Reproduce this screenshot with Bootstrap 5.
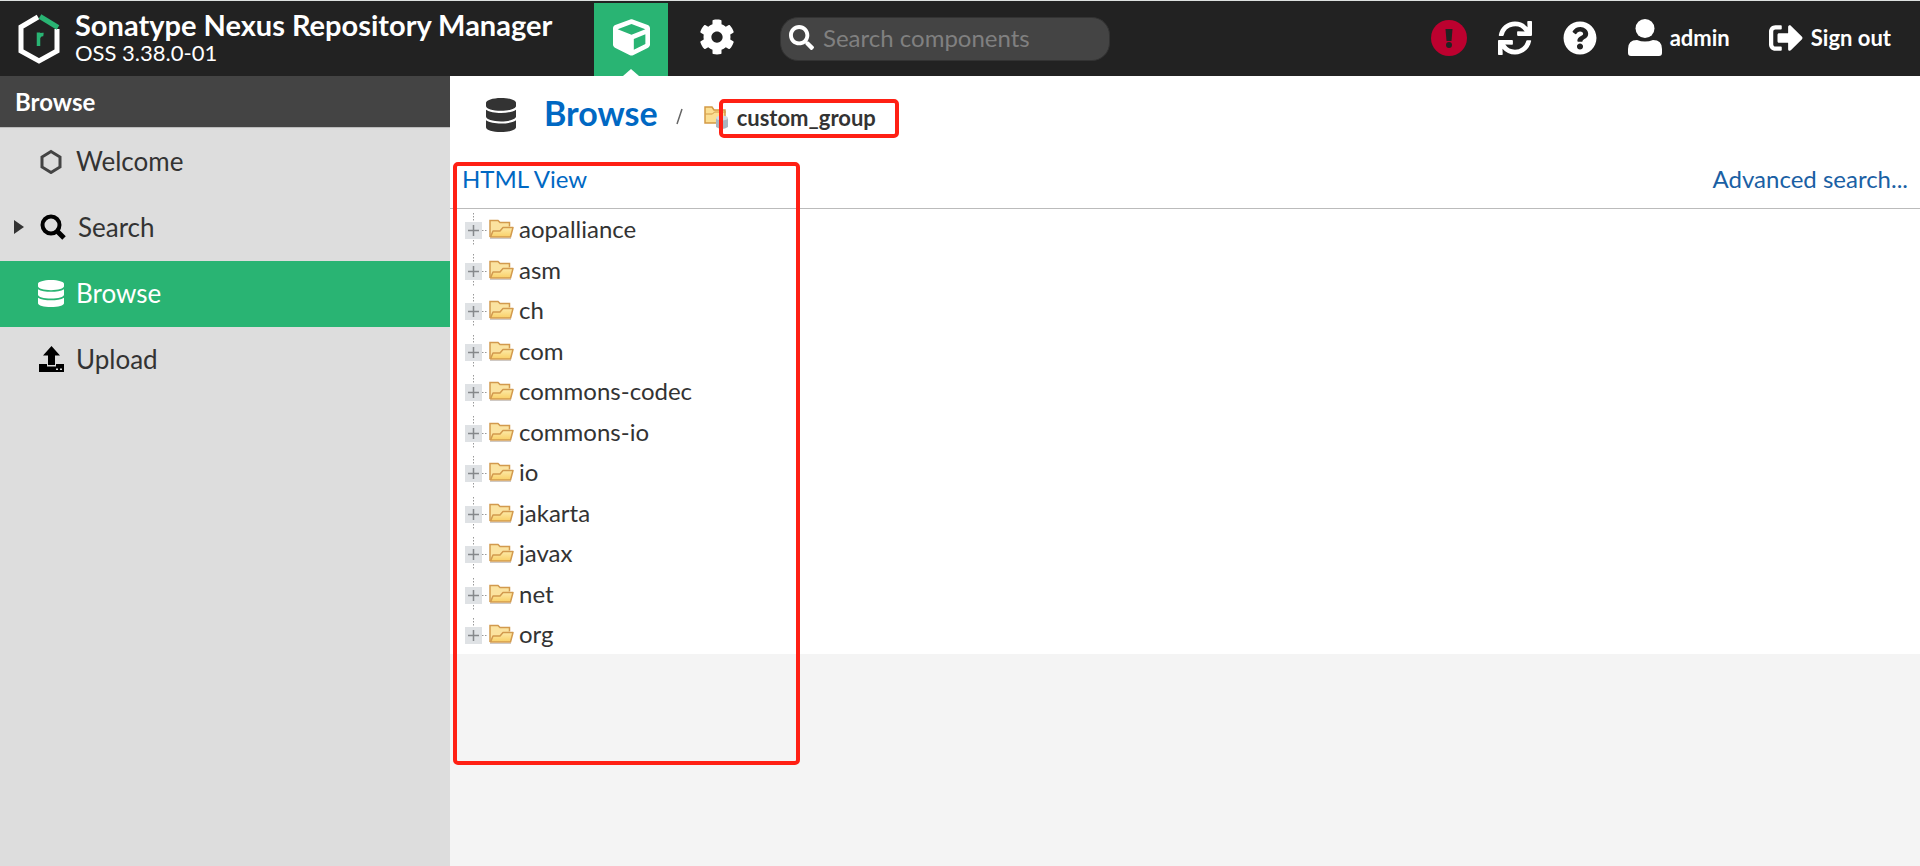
<!DOCTYPE html>
<html lang="en">
<head>
<meta charset="utf-8">
<meta name="viewport" content="width=device-width, initial-scale=1">
<title>Browse - Nexus Repository Manager</title>
<link href="https://cdn.jsdelivr.net/npm/bootstrap@5.3.0/dist/css/bootstrap.min.css" rel="stylesheet">
<style>
  body { font-family: Lato, "Liberation Sans", sans-serif; font-size: 24px; line-height: 32px; color: #333; background: #f4f4f4; }
  a { text-decoration: none; }
  svg { display: block; flex: none; }
  .topbar { height: 76px; background: #222; border-top: 1px solid #dde1e0; color: #fff; }
  .brand { width: 594px; padding-left: 18px; gap: 15px; }
  .brand-name { font-size: 29px; line-height: 28px; font-weight: 700; }
  .brand-version { font-size: 22px; line-height: 28px; }
  .mode { width: 74px; border: 0; background: none; color: #fff; padding: 0 0 4px; }
  .mode.active { background: #29b473; margin-top: 2px; }
  .mode.active::after { content: ""; position: absolute; left: 50%; bottom: 0; margin-left: -8px; border: 8px solid transparent; border-top: 0; border-bottom: 7px solid #fff; }
  .quick { width: 330px; height: 44px; margin: 0 0 0 30px; padding: 0 8px 2px; gap: 9px; background: #444; border: 1px solid #333; border-radius: 18px; }
  .quick input { min-width: 0; background: none; border: 0; outline: 0; padding: 0; color: #fff; font-size: 24px; }
  .quick input::placeholder { color: #808080; opacity: 1; }
  .tools { gap: 31px; padding: 0 29px 2px 0; }
  .tools button { border: 0; background: none; padding: 0; color: #fff; font-size: 22px; font-weight: 700; gap: 8px; }
  .side { width: 450px; background: #ddd; }
  .side-title { font-size: 24px; line-height: 51px; padding-left: 15px; background: #444; color: #fff; border-bottom: 1px solid #bbb; font-weight: 700; height: 52px; margin-bottom: 1px; }
  .side-link { height: 66px; padding: 0 0 2px 38px; gap: 12px; color: #333; font-size: 26px; }
  .side-link.active { background: #29b473; color: #fff; }
  .twisty { left: 14px; top: 25px; }
  .crumbs { height: 81px; padding: 0 0 3px 36px; }
  .crumbs h1 { font-size: 34px; line-height: 40px; font-weight: 700; }
  .blue { color: #0068c3; }
  .deep-blue { color: #1a60a4; }
  .repo { font-size: 22px; font-weight: 700; gap: 8px; margin: 5px 0 0 20px; }
  .bar { height: 52px; padding: 6px 12px 0; border-bottom: 1px solid #bbb; }
  .tree li { height: 40px; padding-left: 15px; gap: 2px; }
  .tree li:nth-child(even) { height: 41px; }
  .tree span { padding-left: 3px; }
  .frame { position: absolute; border: 4px solid #ff2014; border-radius: 5px; pointer-events: none; }
  .frame-repo { inset: -3px -23px -4px 15px; }
  .frame-tree { left: 3px; top: 86px; width: 347px; height: 603px; }
</style>
</head>
<body>
<svg width="0" height="0" class="position-absolute" aria-hidden="true">
  <defs>
    <symbol id="search" viewBox="0 0 512 512"><path fill="currentColor" d="M505 442.700L405.300 343c-4.500-4.500-10.600-7-17-7H372c27.600-35.300 44-79.700 44-128C416 93.100 322.900 0 208 0S0 93.100 0 208s93.100 208 208 208c48.300 0 92.700-16.400 128-44v16.300c0 6.400 2.500 12.500 7 17l99.700 99.700c9.400 9.400 24.600 9.400 33.900 0l28.300-28.300c9.400-9.400 9.400-24.600.1-34zM208 336c-70.700 0-128-57.200-128-128 0-70.700 57.200-128 128-128 70.700 0 128 57.200 128 128 0 70.700-57.200 128-128 128z"/></symbol>
    <symbol id="database" viewBox="0 0 448 512" preserveAspectRatio="none"><path fill="currentColor" d="M448 73.143v45.714C448 159.143 347.667 192 224 192S0 159.143 0 118.857V73.143C0 32.857 100.333 0 224 0s224 32.857 224 73.143zM448 176v102.857C448 319.143 347.667 352 224 352S0 319.143 0 278.857V176c48.125 33.143 136.208 48.572 224 48.572S399.874 209.143 448 176zm0 160v102.857C448 479.143 347.667 512 224 512S0 479.143 0 438.857V336c48.125 33.143 136.208 48.572 224 48.572S399.874 369.143 448 336z"/></symbol>
    <linearGradient id="gold" x1="0" y1="0" x2="0" y2="1"><stop offset="0" stop-color="#fdeaa8"/><stop offset="1" stop-color="#f9cf66"/></linearGradient>
    <symbol id="folder" viewBox="0 0 25 20">
      <path d="M1 19.500h21" stroke="#cfc9c4" stroke-width="1"/>
      <path d="M1 18V1.500h8l2 2h9.500v4" fill="#fbe3a0" stroke="#d29a4e" stroke-width="1.500"/>
      <path d="M1.500 18L4 12h7l3-3.500h10l-2.500 9.500z" fill="url(#gold)" stroke="#d29a4e" stroke-width="1.500" stroke-linejoin="round"/>
    </symbol>
    <symbol id="expander" viewBox="0 0 22 36">
      <path d="M8.500 2v33M17 19.500h5" stroke="#999" stroke-dasharray="1.500 1.500"/>
      <path d="M0 11h17v17H0z" fill="#dfe2e5"/>
      <path d="M8.500 14v11M3 19.500h11" stroke="#85888b" stroke-width="1.500"/>
    </symbol>
    <symbol id="expander-end" viewBox="0 0 22 36">
      <path d="M8.500 2v10M17 19.500h5" stroke="#999" stroke-dasharray="1.500 1.500"/>
      <path d="M0 11h17v17H0z" fill="#dfe2e5"/>
      <path d="M8.500 14v11M3 19.500h11" stroke="#85888b" stroke-width="1.500"/>
    </symbol>
  </defs>
</svg>

<div class="d-flex flex-column min-vh-100">
  <header class="topbar d-flex align-items-stretch">
    <div class="brand d-flex align-items-center flex-shrink-0">
      <svg width="42" height="50" viewBox="0 0 42 50"><path d="M20 3L3 13v24l18 10 18-10V15" fill="none" stroke="#fff" stroke-width="5"/><path d="M22 2.500L40 13.500" stroke="#29b473" stroke-width="5"/><path d="M20.500 32V18.500M20.500 24q1-4 5-3.500" fill="none" stroke="#29b473" stroke-width="3.500"/></svg>
      <div>
        <div class="brand-name">Sonatype Nexus Repository Manager</div>
        <div class="brand-version">OSS 3.38.0-01</div>
      </div>
    </div>
    <button class="mode active position-relative d-flex justify-content-center align-items-center" aria-label="Browse server contents">
      <svg width="37" height="37" viewBox="0 0 512 512"><path fill="currentColor" d="M239.100 6.300l-208 78c-18.700 7-31.100 25-31.100 45v225.100c0 18.200 10.300 34.800 26.500 42.900l208 104c13.500 6.800 29.400 6.800 42.900 0l208-104c16.300-8.100 26.500-24.800 26.500-42.900V129.300c0-20-12.400-37.900-31.100-44.900l-208-78C262 2.200 250 2.200 239.100 6.300zM256 68.400l192 72v1.100l-192 78-192-78v-1.100l192-72zm32 356V275.500l160-65v133.900l-160 80z"/></svg>
    </button>
    <button class="mode d-flex justify-content-center align-items-center ms-2 ps-2" aria-label="Administration">
      <svg width="36" height="36" viewBox="0 0 512 512"><path fill="currentColor" d="M487.400 315.700l-42.600-24.600c4.300-23.200 4.300-47 0-70.200l42.600-24.600c4.900-2.800 7.100-8.600 5.500-14-11.100-35.600-30-67.800-54.700-94.600-3.800-4.100-10-5.100-14.800-2.300L380.800 110c-17.900-15.400-38.500-27.300-60.800-35.100V25.800c0-5.600-3.900-10.500-9.400-11.700-36.700-8.200-74.300-7.800-109.200 0-5.500 1.200-9.400 6.100-9.400 11.700V75c-22.200 7.900-42.800 19.800-60.800 35.100L88.700 85.500c-4.900-2.800-11-1.900-14.800 2.300-24.700 26.700-43.600 58.900-54.700 94.600-1.700 5.400.6 11.200 5.500 14L67.300 221c-4.300 23.200-4.300 47 0 70.200l-42.600 24.600c-4.900 2.800-7.100 8.600-5.500 14 11.100 35.600 30 67.800 54.700 94.600 3.800 4.100 10 5.100 14.800 2.300l42.600-24.600c17.900 15.400 38.500 27.300 60.800 35.100v49.200c0 5.600 3.900 10.500 9.400 11.700 36.700 8.200 74.300 7.800 109.200 0 5.500-1.200 9.400-6.100 9.400-11.700v-49.200c22.200-7.900 42.800-19.800 60.800-35.100l42.600 24.600c4.900 2.800 11 1.900 14.800-2.300 24.700-26.700 43.600-58.900 54.700-94.600 1.500-5.500-.7-11.300-5.600-14.100zM256 336c-44.100 0-80-35.900-80-80s35.900-80 80-80 80 35.900 80 80-35.900 80-80 80z"/></svg>
    </button>
    <label class="quick d-flex align-items-center align-self-center">
      <svg width="25" height="25"><use href="#search"/></svg>
      <input class="w-100" type="text" placeholder="Search components" aria-label="Search components">
    </label>
    <div class="tools d-flex align-items-center ms-auto">
      <button aria-label="Status"><svg width="36" height="36" viewBox="0 0 36 36"><circle cx="18" cy="18" r="18" fill="#bc012f"/><path d="M14.500 9h7l-1 12h-5z" fill="#222"/><circle cx="18" cy="25" r="3" fill="#222"/></svg></button>
      <button aria-label="Refresh"><svg width="34" height="34" viewBox="0 0 512 512"><path fill="currentColor" d="M440.650 12.570l4 82.770A247.160 247.160 0 0 0 255.830 8C134.730 8 33.910 94.920 12.290 209.820A12 12 0 0 0 24.090 224h49.050a12 12 0 0 0 11.670-9.260 175.910 175.910 0 0 1 317-56.940l-101.460-4.860a12 12 0 0 0-12.570 12v47.410a12 12 0 0 0 12 12H500a12 12 0 0 0 12-12V12a12 12 0 0 0-12-12h-47.370a12 12 0 0 0-11.980 12.570zM255.830 432a175.610 175.610 0 0 1-146-77.800l101.800 4.870a12 12 0 0 0 12.570-12v-47.400a12 12 0 0 0-12-12H12a12 12 0 0 0-12 12V500a12 12 0 0 0 12 12h47.350a12 12 0 0 0 12-12.600l-4.150-82.570A247.170 247.170 0 0 0 255.830 504c121.110 0 221.930-86.920 243.550-201.820a12 12 0 0 0-11.800-14.180h-49.050a12 12 0 0 0-11.670 9.260A175.860 175.860 0 0 1 255.830 432z"/></svg></button>
      <button aria-label="Help"><svg width="34" height="34" viewBox="0 0 512 512"><path fill="currentColor" d="M504 256c0 136.997-111.043 248-248 248S8 392.997 8 256C8 119.083 119.043 8 256 8s248 111.083 248 248zM262.655 90c-54.497 0-89.255 22.957-116.549 63.758-3.536 5.286-2.353 12.415 2.715 16.258l34.699 26.310c5.205 3.947 12.621 3.008 16.665-2.122 17.864-22.658 30.113-35.797 57.303-35.797 20.429 0 45.698 13.148 45.698 32.958 0 14.976-12.363 22.667-32.534 33.976C247.128 238.528 216 254.941 216 296v4c0 6.627 5.373 12 12 12h56c6.627 0 12-5.373 12-12v-1.333c0-28.462 83.186-29.647 83.186-106.667 0-58.002-60.165-102-116.531-102zM256 338c-25.365 0-46 20.635-46 46 0 25.364 20.635 46 46 46s46-20.636 46-46c0-25.365-20.635-46-46-46z"/></svg></button>
      <button class="d-flex align-items-center"><svg width="34" height="37" viewBox="0 0 34 37"><circle cx="17" cy="9.500" r="9.500" fill="currentColor"/><path d="M0 34V30q0-9 9-9 8 3 16 0 9 0 9 9v4q0 3-3 3H3q-3 0-3-3z" fill="currentColor"/></svg>admin</button>
      <button class="d-flex align-items-center ms-2"><svg width="34" height="26" viewBox="0 64 512 384"><path fill="currentColor" d="M497 273L329 441c-15 15-41 4.500-41-17v-96H152c-13.300 0-24-10.700-24-24v-96c0-13.300 10.700-24 24-24h136V88c0-21.400 25.900-32 41-17l168 168c9.300 9.400 9.300 24.600 0 34zM192 436v-40c0-6.600-5.400-12-12-12H96c-17.700 0-32-14.300-32-32V160c0-17.700 14.300-32 32-32h84c6.600 0 12-5.400 12-12V76c0-6.600-5.400-12-12-12H96c-53 0-96 43-96 96v192c0 53 43 96 96 96h84c6.600 0 12-5.400 12-12z"/></svg>Sign out</button>
    </div>
  </header>

  <div class="d-flex flex-grow-1">
    <nav class="side flex-shrink-0">
      <div class="side-title">Browse</div>
      <a href="#" class="side-link d-flex align-items-center"><svg width="26" height="26" viewBox="0 0 26 26"><path d="M13 3.500l9 5.500v10L13 24.500 4 19V9z" fill="none" stroke="#444" stroke-width="3"/></svg>Welcome</a>
      <a href="#" class="side-link d-flex align-items-center position-relative"><svg class="twisty position-absolute" width="10" height="14" viewBox="0 0 10 14"><path d="M0 0l10 7-10 7z" fill="#333"/></svg><svg width="28" height="26" viewBox="0 0 28 26"><circle cx="13" cy="11" r="8.500" fill="none" stroke="#000" stroke-width="4"/><path d="M19 17l7 7" stroke="#000" stroke-width="5"/></svg>Search</a>
      <a href="#" class="side-link active d-flex align-items-center"><svg width="26" height="27"><use href="#database"/></svg>Browse</a>
      <a href="#" class="side-link d-flex align-items-center"><svg width="26" height="26" viewBox="0 0 26 26"><path d="M13.500 0L22 9.500h-5V19h-7V9.500H5z"/><path d="M1 18h8v2.500h9V18h8v8H1z"/><path d="M18 22.500h2v1.500h-2zM22 22.500h2v1.500h-2z" fill="#ddd"/></svg>Upload</a>
    </nav>

    <main class="flex-grow-1 position-relative">
      <div class="bg-white">
        <div class="crumbs d-flex align-items-center">
          <svg width="30" height="34"><use href="#database"/></svg>
          <h1 class="mb-0 ms-4 ps-1 pb-1"><a href="#" class="blue">Browse</a></h1>
          <svg class="ms-3" width="10" height="20" viewBox="0 0 10 20"><path d="M8 4L3 19" stroke="#666" stroke-width="1.500"/></svg>
          <div class="repo d-flex align-items-center position-relative">
            <svg width="25" height="25" viewBox="0 0 25 25"><path d="M1 18V2h7l2 3h11v13z" fill="#fbdf93" stroke="#d49a45" stroke-width="1.500"/><path d="M1.500 9h7l2-2H22" fill="none" stroke="#d49a45"/><path d="M12 13v9q6 4 12 0v-9z" fill="#aab5bf"/><ellipse cx="18" cy="13" rx="6" ry="2.500" fill="#d3dae0"/></svg>
            <span>custom_group</span>
            <div class="frame frame-repo"></div>
          </div>
        </div>
        <div class="bar d-flex justify-content-between">
          <a href="#" class="blue">HTML View</a>
          <a href="#" class="deep-blue">Advanced search...</a>
        </div>
        <ul class="tree list-unstyled mb-0" id="tree"></ul>
      </div>
      <div class="frame frame-tree"></div>
    </main>
  </div>
</div>
<script>
  const groups = ["aopalliance", "asm", "ch", "com", "commons-codec", "commons-io", "io", "jakarta", "javax", "net", "org"];
  document.getElementById("tree").innerHTML = groups.map((name, i) =>
    `<li class="d-flex align-items-center"><svg width="22" height="36"><use href="#expander${i === groups.length - 1 ? "-end" : ""}"/></svg><svg width="25" height="20"><use href="#folder"/></svg><span>${name}</span></li>`).join("");
</script>
<script src="https://cdn.jsdelivr.net/npm/bootstrap@5.3.0/dist/js/bootstrap.bundle.min.js"></script>
</body>
</html>
